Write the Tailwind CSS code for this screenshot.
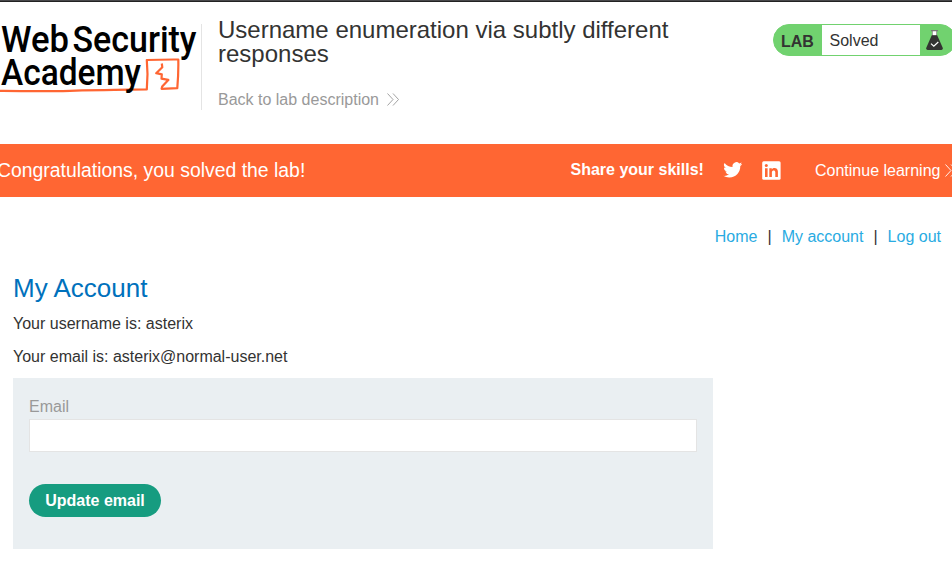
<!DOCTYPE html>
<html lang="en">
<head>
<meta charset="utf-8">
<title>Username enumeration via subtly different responses</title>
<script src="https://cdn.jsdelivr.net/npm/@tailwindcss/browser@4"></script>
</head>
<body class="h-[562px] overflow-hidden bg-white font-['Liberation_Sans',Arial,sans-serif] text-base text-[#333332]">
<div class="h-[2px] border-b border-[#222] bg-[#48484a]"></div>
<header class="flex h-[142px] items-start overflow-hidden pt-[22px]">
  <svg class="h-[86px] w-[201px] shrink-0" viewBox="0 24 201 86" role="img" aria-label="Web Security Academy">
    <path d="M0 90.9 C20 91.1 45 91.4 70 90.8 S120 89.6 146.8 89.4 L147.5 74 L146.8 60 Q162 59.4 178.3 59.5 Q178.6 73 177.3 88.2 L161.6 88.8 L162.2 86.5 L168.3 79.9 L161.5 78.7 L161.8 74.3 L156.2 73.2 L162.3 67.3 L161.8 63.5" fill="none" stroke="#ff6633" stroke-width="2.2" stroke-linejoin="round"/>
    <g class="font-['Roboto',sans-serif] font-medium" fill="#000" font-size="37.5">
      <text x="1" y="52.4" textLength="68" lengthAdjust="spacingAndGlyphs">Web</text>
      <text x="72.5" y="52.4" textLength="124" lengthAdjust="spacingAndGlyphs">Security</text>
      <text x="1" y="85.2" textLength="140" lengthAdjust="spacingAndGlyphs">Academy</text>
    </g>
  </svg>
  <div class="h-[86px] w-px shrink-0 bg-[#e4e4e4]"></div>
  <div class="ml-4 w-[500px] shrink-0">
    <h1 class="-mt-[6px] text-2xl leading-6">Username enumeration via subtly different responses</h1>
    <a class="mt-[24px] flex items-center leading-[19px] text-[#999]">Back to lab description
      <svg class="ml-2 h-[13px] w-3" viewBox="0 0 12 13" fill="none" stroke="#999" stroke-width=".9"><path d="M.5 .5 6 6.5 .5 12.5M6 .5l5.5 6L6 12.5"/></svg>
    </a>
  </div>
  <div class="ml-[55px] flex h-8 w-[183px] shrink-0 overflow-hidden rounded-full border border-[#71d26f] bg-[#71d26f]">
    <p class="w-12 pl-[7px] font-bold leading-[33px]">LAB</p>
    <p class="w-[98px] bg-white pl-[7.5px] leading-8">Solved</p>
    <svg class="ml-[6px] mt-[5px] h-[21px] w-[17px]" viewBox="0 0 17 21"><path d="M5 0h7v1.2h-1V6H6V1.2H5z" fill="#777b75"/><path d="M6.7 1.2h3.6V5.5H6.7z" fill="#fff"/><path d="M5.8 5.2h5.4L16.8 18Q17.1 20 15.3 20H1.7Q-.1 20 .2 18z" fill="#333332"/><path d="m5 13.6 2.8 2.6 4.5-4.2" fill="none" stroke="#fff" stroke-width="1.2"/></svg>
  </div>
</header>
<section class="flex h-[53px] overflow-hidden whitespace-nowrap bg-[#ff6633] text-white">
  <p class="-ml-[3px] w-[573.5px] shrink-0 text-[19.4px] leading-[53px]">Congratulations, you solved the lab!</p>
  <p class="w-[152px] shrink-0 font-bold leading-[52px]">Share your skills!</p>
  <svg class="mt-[16px] h-[19.5px] w-[19.5px] shrink-0" viewBox="0 0 24 24" fill="#fff"><path d="M23.64 4.94a9.6 9.6 0 0 1-2.75.75 4.8 4.8 0 0 0 2.1-2.65 9.6 9.6 0 0 1-3.04 1.16 4.79 4.79 0 0 0-8.16 4.37A13.6 13.6 0 0 1 1.92 3.57a4.79 4.79 0 0 0 1.48 6.39 4.8 4.8 0 0 1-2.17-.6v.06a4.79 4.79 0 0 0 3.84 4.69 4.8 4.8 0 0 1-2.16.08 4.79 4.79 0 0 0 4.47 3.33A9.6 9.6 0 0 1 .3 19.5a13.55 13.55 0 0 0 7.34 2.15c8.8 0 13.62-7.3 13.62-13.62l-.02-.62a9.7 9.7 0 0 0 2.4-2.47z"/></svg>
  <svg class="ml-[20px] mt-[17px] h-[19px] w-[19px] shrink-0" viewBox="0 0 19 19"><rect x=".2" y=".3" width="18.4" height="18.4" rx="1.5" fill="#fff"/><g fill="#ff6633"><path d="M3 7.3h2.6V16H3zM7.3 7.3h2.5v1.2c1.4-2.3 6.1-1.9 6.1 2.1V16h-2.6v-4.7c0-2.7-3.4-2.3-3.4 0V16H7.3z"/><circle cx="4.3" cy="4.5" r="1.5"/></g></svg>
  <a class="ml-[34px] flex shrink-0 items-center leading-[53px]">Continue learning
    <svg class="ml-[5px] h-[13px] w-3" viewBox="0 0 12 13" fill="none" stroke="#fff" stroke-width=".9"><path d="M.5 .5 6 6.5 .5 12.5M6 .5l5.5 6L6 12.5"/></svg>
  </a>
</section>
<main class="pl-[13px]">
  <nav class="flex justify-end gap-[10px] pr-[11px] pt-[30px] leading-5">
    <a class="text-[#29abe2]">Home</a><span>|</span><a class="text-[#29abe2]">My account</a><span>|</span><a class="text-[#29abe2]">Log out</a>
  </nav>
  <h2 class="mt-[26px] text-[26px] leading-[30px] text-[#0071bc]">My Account</h2>
  <p class="mt-[11px] leading-5">Your username is: asterix</p>
  <p class="mt-[13px] leading-5">Your email is: asterix@normal-user.net</p>
  <form class="mt-[11px] h-[171px] w-[700px] bg-[#eaeff2] px-4 pt-[19px]">
    <label for="email" class="block leading-5 text-[#999]">Email</label>
    <input id="email" type="email" class="mt-[2px] block h-[33px] w-full border border-[#e4e4e4] bg-white px-2 outline-none">
    <button type="button" class="mt-8 block h-[33px] w-[132px] rounded-full bg-[#169c80] font-bold leading-[33px] text-white">Update email</button>
  </form>
</main>
</body>
</html>
